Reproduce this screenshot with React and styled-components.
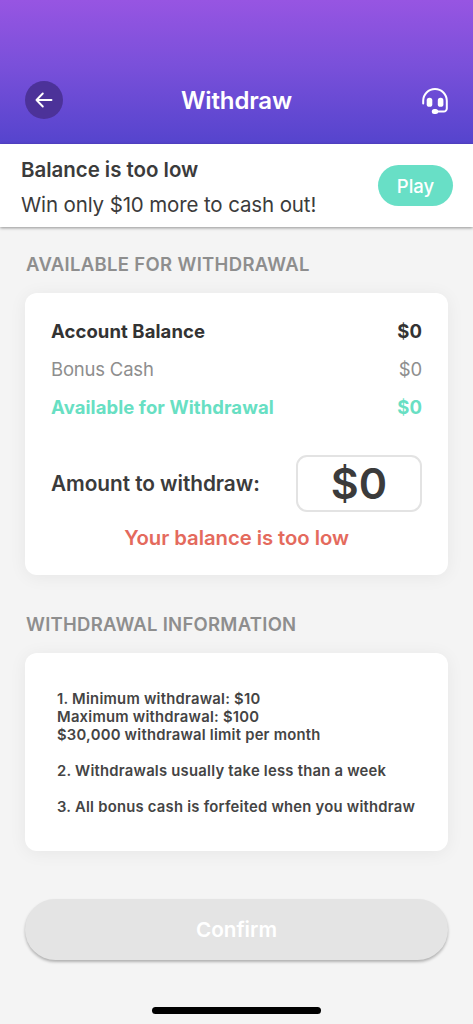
import React from "react";
import styled, { createGlobalStyle } from "styled-components";

const GlobalStyle = createGlobalStyle`
  *, *::before, *::after { box-sizing: border-box; }
  body { margin: 0; background: #f4f4f4; }
  button { border: 0; padding: 0; font: inherit; letter-spacing: inherit; }
`;

const Screen = styled.div`
  display: flex;
  flex-direction: column;
  width: 473px;
  height: 1024px;
  overflow: hidden;
  background: #f4f4f4;
  color: #3b3b3b;
  font-family: Inter, "Liberation Sans", sans-serif;
`;

const Header = styled.header`
  display: grid;
  grid-template-columns: 38px 1fr 38px;
  align-items: center;
  height: 144px;
  flex: none;
  padding: 56px 25px 0;
  background: linear-gradient(#9755e2, #7a50da 45%, #5544cd);
  color: #fff;
`;

const BackButton = styled.button`
  display: flex;
  align-items: center;
  justify-content: center;
  width: 38px;
  height: 38px;
  border-radius: 50%;
  background: #4c3299;
  color: #fff;
`;

const SupportButton = styled.button`
  display: flex;
  align-items: center;
  justify-content: flex-end;
  width: 38px;
  height: 38px;
  padding-top: 2px;
  background: none;
  color: #fff;
`;

const Title = styled.h1`
  margin: 0;
  padding-top: 2px;
  text-align: center;
  font-size: 24px;
  line-height: 30px;
  font-weight: 600;
  letter-spacing: -0.15px;
`;

const Banner = styled.section`
  display: flex;
  align-items: center;
  justify-content: space-between;
  height: 83px;
  flex: none;
  padding: 0 20px 0 21px;
  background: #fff;
  box-shadow: 0 1px 3px rgba(0, 0, 0, 0.4);
`;

const BannerText = styled.div`
  display: flex;
  flex-direction: column;
  padding-top: 2px;
`;

const BannerLine = styled.p`
  margin: 0;
  font-size: 20.5px;
  line-height: 35px;
  white-space: nowrap;
  font-weight: ${(p) => (p.$strong ? 600 : 400)};
  letter-spacing: ${(p) => (p.$strong ? -0.04 : -0.13)}px;
`;

const PlayButton = styled.button`
  width: 75px;
  height: 41px;
  padding-top: 1px;
  border-radius: 21px;
  background: #68dfc6;
  color: #fff;
  font-size: 18.5px;
  font-weight: 500;
`;

const Content = styled.main`
  display: flex;
  flex-direction: column;
  padding: 27px 25px 0;
`;

const SectionTitle = styled.h2`
  margin: ${(p) => p.$gap || 0}px 0 18px 1px;
  font-size: 18.5px;
  line-height: 21px;
  font-weight: 600;
  color: #8e8e8e;
  white-space: nowrap;
  letter-spacing: ${(p) => p.$track || 0}px;
`;

const Card = styled.section`
  border-radius: 12px;
  background: #fff;
  box-shadow: 0 2px 18px rgba(0, 0, 0, 0.06);
`;

const BalanceCard = styled(Card)`
  height: 282px;
  padding: 19px 26px 0;
`;

const tones = {
  dark: { color: "#333", weight: 700, track: 0.08 },
  muted: { color: "#8e8e8e", weight: 400, track: -0.2 },
  accent: { color: "#68dfc3", weight: 700, track: 0.08 },
};

const BalanceRow = styled.div`
  display: flex;
  justify-content: space-between;
  font-size: 18.5px;
  line-height: 38px;
  color: ${(p) => tones[p.$tone].color};
  font-weight: ${(p) => tones[p.$tone].weight};
  letter-spacing: ${(p) => tones[p.$tone].track}px;
`;

const AmountRow = styled.label`
  display: flex;
  align-items: center;
  justify-content: space-between;
  margin-top: 29px;
  font-size: 20.8px;
  font-weight: 600;
  letter-spacing: -0.05px;
`;

const AmountBox = styled.span`
  display: flex;
  align-items: center;
  justify-content: center;
  width: 126px;
  height: 57px;
  padding-bottom: 1px;
  border: 2px solid #e3e3e3;
  border-radius: 11px;
  font-size: 43px;
  font-weight: 600;
  letter-spacing: 0;
`;

const ErrorText = styled.p`
  margin: 13px 0 0;
  text-align: center;
  font-size: 20.3px;
  line-height: 26px;
  font-weight: 600;
  color: #e46a5d;
  letter-spacing: -0.05px;
`;

const InfoCard = styled(Card)`
  height: 198px;
  padding: 37px 0 0 32px;
`;

const InfoItem = styled.p`
  margin: 0 0 18px;
  font-size: 14.8px;
  line-height: 18px;
  font-weight: 600;
  color: #444;
  white-space: nowrap;
  letter-spacing: 0.24px;
`;

const ConfirmButton = styled.button`
  height: 61px;
  margin-top: 48px;
  border-radius: 31px;
  background: #e4e4e4;
  color: #fff;
  font-size: 20.7px;
  font-weight: 600;
  box-shadow: 0 2px 3px rgba(0, 0, 0, 0.28);
`;

const HomeIndicator = styled.div`
  align-self: center;
  width: 169px;
  height: 7px;
  margin: auto 0 10px;
  border-radius: 4px;
  background: #000;
`;

const ArrowIcon = () => (
  <svg width="18" height="16" viewBox="0 0 18 16" fill="none" stroke="currentColor" strokeWidth="1.9" strokeLinecap="round" strokeLinejoin="round">
    <path d="M16.5 8H1.5M7.8 1.5 1.5 8l6.3 6.5" />
  </svg>
);

const HeadsetIcon = () => (
  <svg width="26" height="26" viewBox="0 0 26 26" fill="none">
    <path d="M1.2 15.6V12.8a11.8 11.8 0 0 1 23.6 0V20.5a3 3 0 0 1-3 3H14" stroke="currentColor" strokeWidth="2" strokeLinecap="round" />
    <rect x="4.7" y="9.8" width="5.6" height="9" rx="2.6" fill="currentColor" />
    <rect x="15.8" y="9.8" width="5.6" height="9" rx="2.6" fill="currentColor" />
    <rect x="9.8" y="21" width="6.4" height="5" rx="2.5" fill="currentColor" />
  </svg>
);

export default function App() {
  return (
    <Screen>
      <GlobalStyle />
      <Header>
        <BackButton aria-label="Back"><ArrowIcon /></BackButton>
        <Title>Withdraw</Title>
        <SupportButton aria-label="Support"><HeadsetIcon /></SupportButton>
      </Header>
      <Banner>
        <BannerText>
          <BannerLine $strong>Balance is too low</BannerLine>
          <BannerLine>Win only $10 more to cash out!</BannerLine>
        </BannerText>
        <PlayButton>Play</PlayButton>
      </Banner>
      <Content>
        <SectionTitle $track={0.32}>AVAILABLE FOR WITHDRAWAL</SectionTitle>
        <BalanceCard>
          <BalanceRow $tone="dark"><span>Account Balance</span><span>$0</span></BalanceRow>
          <BalanceRow $tone="muted"><span>Bonus Cash</span><span>$0</span></BalanceRow>
          <BalanceRow $tone="accent"><span>Available for Withdrawal</span><span>$0</span></BalanceRow>
          <AmountRow>
            <span>Amount to withdraw:</span>
            <AmountBox>$0</AmountBox>
          </AmountRow>
          <ErrorText>Your balance is too low</ErrorText>
        </BalanceCard>
        <SectionTitle $gap={39} $track={0.26}>WITHDRAWAL INFORMATION</SectionTitle>
        <InfoCard>
          <InfoItem>
            1. Minimum withdrawal: $10<br />
            Maximum withdrawal: $100<br />
            $30,000 withdrawal limit per month
          </InfoItem>
          <InfoItem>2. Withdrawals usually take less than a week</InfoItem>
          <InfoItem>3. All bonus cash is forfeited when you withdraw</InfoItem>
        </InfoCard>
        <ConfirmButton>Confirm</ConfirmButton>
      </Content>
      <HomeIndicator />
    </Screen>
  );
}
